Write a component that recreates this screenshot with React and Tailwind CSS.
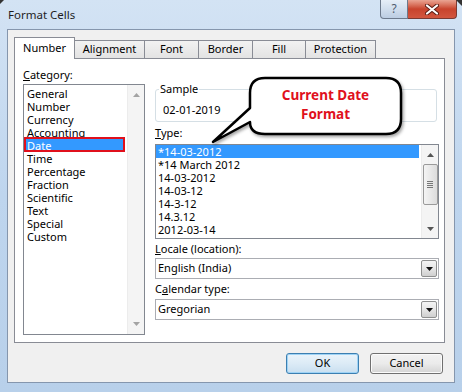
const categories = ["General","Number","Currency","Accounting","Date","Time","Percentage","Fraction","Scientific","Text","Special","Custom"];
const types = ["*14-03-2012","*14 March 2012","14-03-2012","14-03-12","14-3-12","14.3.12","2012-03-14"];
const tabs = [
  { label: "Number", w: "w-[61px]", sel: true },
  { label: "Alignment", w: "w-[71px]" },
  { label: "Font", w: "w-[55px]" },
  { label: "Border", w: "w-[55px]" },
  { label: "Fill", w: "w-[54px]" },
  { label: "Protection", w: "w-[71px]" },
];

function Up({ color = "#a3a3a3" }) {
  return (
    <svg width="7" height="4" viewBox="0 0 7 4"><path d="M0 4 L3.5 0 L7 4 Z" fill={color} /></svg>
  );
}
function Down({ color = "#a3a3a3" }) {
  return (
    <svg width="7" height="4" viewBox="0 0 7 4"><path d="M0 0 L7 0 L3.5 4 Z" fill={color} /></svg>
  );
}

function ComboButton() {
  return (
    <div className="w-[16px] h-[17px] mr-[1px] border border-[#8e8f8f] rounded-[2px] bg-gradient-to-b from-[#f4f4f4] via-[#e6e6e6] to-[#cfcfcf] flex items-center justify-center">
      <svg width="7" height="4" viewBox="0 0 7 4"><path d="M0 0 L7 0 L3.5 4 Z" fill="#111" /></svg>
    </div>
  );
}

export default function App() {
  return (
    <div className="relative w-[462px] h-[392px] overflow-hidden bg-gradient-to-b from-[#d3e3f4] via-[#bed5ee] to-[#b8d0ea] font-['Noto_Sans',sans-serif] text-[11px] text-black flex flex-col">
      {/* title bar */}
      <div className="h-[29px] shrink-0 flex items-start justify-between">
        <div className="pl-[8px] pt-[7px] text-[11.5px] leading-[16px] text-[#1e1e1e]">Format Cells</div>
        <div className="flex mr-[5px]">
          <div className="w-[28px] h-[19px] border border-[#6d7a8c] border-t-0 rounded-bl-[4px] bg-gradient-to-b from-[#e6eef7] via-[#d1deed] to-[#bccde2] flex items-center justify-center text-[12px] leading-[12px] text-[#505c6e]">?</div>
          <div className="w-[49px] h-[19px] border border-[#7a3a33] border-t-0 border-l-0 rounded-br-[4px] bg-gradient-to-b from-[#e9a493] via-[#c8432d] to-[#d2563f] flex items-center justify-center">
            <svg width="14" height="11" viewBox="0 0 14 11">
              <path d="M2 1.5 L12 9.5 M12 1.5 L2 9.5" stroke="#5a1c14" strokeWidth="4" strokeLinecap="round" />
              <path d="M2 1.5 L12 9.5 M12 1.5 L2 9.5" stroke="#ffffff" strokeWidth="2.2" strokeLinecap="round" />
            </svg>
          </div>
        </div>
      </div>

      {/* client area */}
      <div className="mx-[7px] h-[354px] shrink-0 border border-[#8596ad] bg-[#f0f0f0] flex flex-col pl-[6px] pt-[7px]">
        {/* tabs */}
        <div className="h-[21px] flex items-end">
          {tabs.map((t) => (
            <div
              key={t.label}
              className={
                t.sel
                  ? `${t.w} h-[22px] -mb-px relative z-10 bg-white border-l border-t border-r border-[#898c95] flex items-center justify-center pb-[1px]`
                  : `${t.w} h-[18px] -ml-px bg-gradient-to-b from-[#f2f2f2] to-[#e3e3e3] border-l border-t border-r border-[#898c95] flex items-center justify-center`
              }
            >
              {t.label}
            </div>
          ))}
        </div>

        {/* panel */}
        <div className="w-[431px] h-[285px] border border-[#898c95] bg-white flex items-start">
          {/* left column */}
          <div className="ml-[8px] mt-[7px] w-[122px] flex flex-col">
            <div className="h-[18px] leading-[18px]"><span className="underline">C</span>ategory:</div>
            <div className="h-[251px] border border-[#828790] flex">
              <div className="flex-1 flex flex-col pt-[2px]">
                {categories.map((c) =>
                  c === "Date" ? (
                    <div key={c} className="relative h-[13px] mr-[2px] bg-[#3399ff] text-white leading-[13px] pl-[3px]">
                      <span className="absolute left-0 right-0 -top-[2px] bottom-0 border-2 border-[#e0101c]" />
                      {c}
                    </div>
                  ) : (
                    <div key={c} className="h-[13px] leading-[13px] pl-[3px]">{c}</div>
                  )
                )}
              </div>
              <div className="w-[17px] bg-[#f4f4f4] border-l border-[#ececec] flex flex-col justify-between items-center pt-[8px] pb-[8px]">
                <Up />
                <Down />
              </div>
            </div>
          </div>

          {/* right column */}
          <div className="ml-[10px] mt-[30px] w-[284px] flex flex-col">
            <div className="relative w-[282px] h-[33px] border border-[#d5dfe5] rounded-[3px]">
              <div className="absolute left-[3px] -top-[8px] bg-white px-[1px] leading-[14px]">Sample</div>
              <div className="pt-[13px] pl-[7px] leading-[14px]">02-01-2019</div>
            </div>
            <div className="h-[22px] leading-[22px]"><span className="underline">T</span>ype:</div>
            <div className="h-[95px] border border-[#828790] flex">
              <div className="flex-1 flex flex-col">
                {types.map((t, i) => (
                  <div key={t} className={i === 0 ? "h-[13px] leading-[13px] pl-[2px] mr-[2px] bg-[#3399ff] text-white" : "h-[13px] leading-[13px] pl-[2px]"}>{t}</div>
                ))}
              </div>
              <div className="w-[17px] bg-[#f4f4f4] border-l border-[#ececec] flex flex-col items-center">
                <div className="h-[19px] flex items-center justify-center"><Up color="#555" /></div>
                <div className="w-[15px] h-[41px] rounded-[2px] border border-[#9a9a9a] bg-gradient-to-r from-[#f4f4f4] to-[#dcdcdc] flex flex-col items-center justify-center gap-[1px]">
                  <div className="w-[6px] h-px bg-[#777]" />
                  <div className="w-[6px] h-px bg-[#777]" />
                  <div className="w-[6px] h-px bg-[#777]" />
                  <div className="w-[6px] h-px bg-[#777]" />
                </div>
                <div className="flex-1 flex items-end justify-center pb-[7px]"><Down color="#555" /></div>
              </div>
            </div>
            <div className="h-[19px] leading-[19px]"><span className="underline">L</span>ocale (location):</div>
            <div className="h-[21px] border border-[#abadb3] flex items-center justify-between pl-[2px]">
              <span>English (India)</span>
              <ComboButton />
            </div>
            <div className="h-[20px] leading-[20px]">C<span className="underline">a</span>lendar type:</div>
            <div className="h-[21px] border border-[#abadb3] flex items-center justify-between pl-[2px]">
              <span>Gregorian</span>
              <ComboButton />
            </div>
          </div>
        </div>

        {/* footer */}
        <div className="mt-[10px] flex justify-end gap-[11px] pr-[11px]">
          <div className="w-[73px] h-[21px] rounded-[3px] border border-[#3c7fb1] bg-gradient-to-b from-[#eaf4fb] via-[#dcebf6] to-[#c9dff0] shadow-[inset_0_0_0_1px_#9fd3f5] flex items-center justify-center">OK</div>
          <div className="w-[73px] h-[21px] rounded-[3px] border border-[#707070] bg-gradient-to-b from-[#f2f2f2] via-[#ebebeb] to-[#d4d4d4] shadow-[inset_0_0_0_1px_#fbfbfb] flex items-center justify-center">Cancel</div>
        </div>
      </div>

      {/* callout */}
      <svg className="absolute left-[205px] top-[72px]" width="205" height="78" viewBox="0 0 205 78">
        <defs>
          <filter id="sh" x="-10%" y="-10%" width="130%" height="140%">
            <feDropShadow dx="1.5" dy="2" stdDeviation="1.5" floodColor="#000" floodOpacity="0.35" />
          </filter>
        </defs>
        <path
          d="M60 6 H181 Q196 6 196 21 V47 Q196 62 181 62 H60 Q45 62 45 50 L8 70 L45 36 V21 Q45 6 60 6 Z"
          fill="#fff"
          stroke="#000"
          strokeWidth="2.5"
          strokeLinejoin="round"
          filter="url(#sh)"
        />
      </svg>
      <div className="absolute left-[250px] top-[86px] w-[151px] flex flex-col items-center text-[13.5px] leading-[19px] font-bold text-[#e0101c]">
        <span>Current Date</span>
        <span>Format</span>
      </div>

      {/* corner artifacts */}
      <svg className="absolute left-0 top-0" width="5" height="5" viewBox="0 0 5 5"><path d="M0 0 H4 L0 4 Z" fill="#333" /></svg>
      <svg className="absolute right-0 top-0" width="6" height="7" viewBox="0 0 6 7"><path d="M0 0 H6 V6 Z" fill="#333" /></svg>
    </div>
  );
}
